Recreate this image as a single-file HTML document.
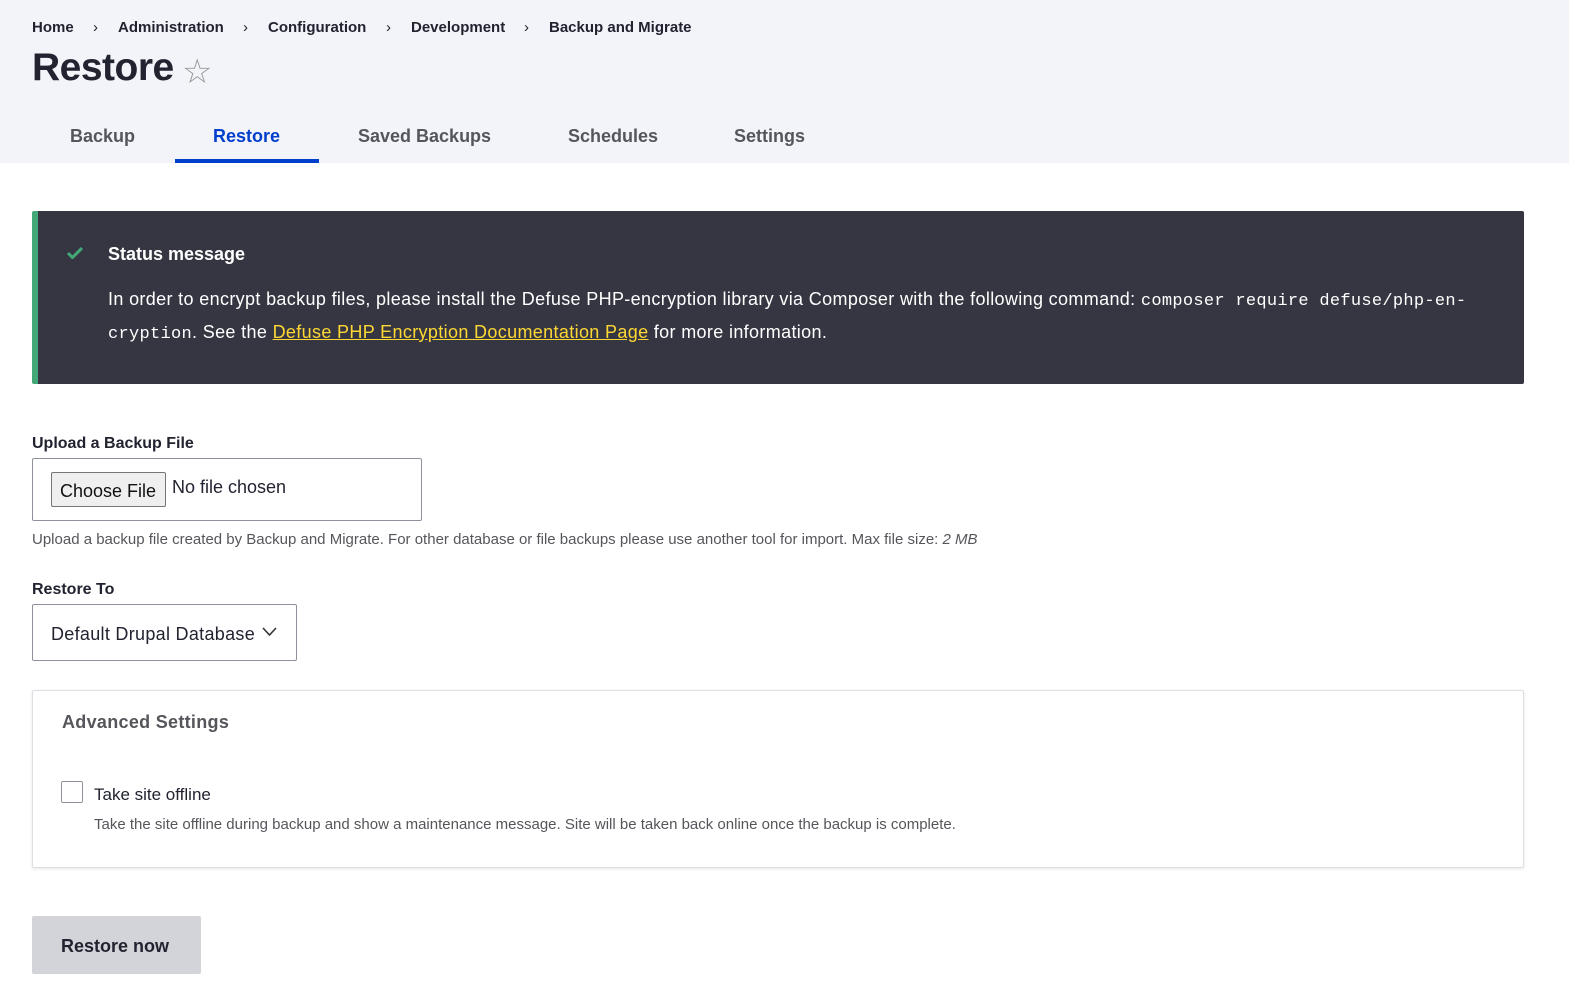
<!DOCTYPE html>
<html><head><meta charset="utf-8"><style>
*{box-sizing:border-box;margin:0;padding:0}
body{width:1569px;height:1002px;background:#fff;font-family:"Liberation Sans",sans-serif;color:#222330;position:relative;overflow:hidden}
.hdr{position:absolute;left:0;top:0;width:1569px;height:163px;background:#f3f4f9}
.abs{position:absolute;white-space:nowrap}
.bc{top:19px;font-size:15px;font-weight:bold;color:#222330}
.h1{left:32px;top:46px;font-size:39px;font-weight:bold;letter-spacing:-0.5px}
.tab{top:126px;font-size:18px;font-weight:bold;color:#55565b}
.msg{position:absolute;left:32px;top:211px;width:1492px;height:173px;background:#353641;border-left:6px solid #42a877;border-radius:2px}
.msg p{font-size:18px;color:#fff;line-height:31px;letter-spacing:0.35px}
code{font-family:"Liberation Mono",monospace;font-size:17px;letter-spacing:0.3px}
.lbl{font-size:16px;font-weight:bold}
</style></head><body>
<div class="hdr"></div>
<div class="abs bc" style="left:32px">Home</div>
<div class="abs bc" style="left:93px;font-weight:normal">›</div>
<div class="abs bc" style="left:118px">Administration</div>
<div class="abs bc" style="left:243px;font-weight:normal">›</div>
<div class="abs bc" style="left:268px">Configuration</div>
<div class="abs bc" style="left:386px;font-weight:normal">›</div>
<div class="abs bc" style="left:411px">Development</div>
<div class="abs bc" style="left:524px;font-weight:normal">›</div>
<div class="abs bc" style="left:549px">Backup and Migrate</div>
<div class="abs h1">Restore</div>
<div class="abs" style="left:182px;top:52px;font-size:34px;color:#999">☆</div>
<div class="abs tab" style="left:70px">Backup</div>
<div class="abs tab" style="left:213px;color:#003ecc">Restore</div>
<div style="position:absolute;left:175px;top:159px;width:144px;height:4px;background:#003ecc"></div>
<div class="abs tab" style="left:358px">Saved Backups</div>
<div class="abs tab" style="left:568px">Schedules</div>
<div class="abs tab" style="left:734px">Settings</div>

<div class="msg">
<svg style="position:absolute;left:29px;top:35px" width="16" height="13" viewBox="0 0 16 13"><path d="M1 7l4.5 4.5L15 2" stroke="#42a877" stroke-width="3" fill="none"/></svg>
<div class="abs" style="left:70px;top:33px;font-size:18px;font-weight:bold;color:#fff">Status message</div>
<p style="position:absolute;left:70px;top:73px;width:1410px">In order to encrypt backup files, please install the Defuse PHP-encryption library via Composer with the following command: <code>composer require defuse/php-en-<br>cryption</code>. See the <span style="color:#fdd835;text-decoration:underline">Defuse PHP Encryption Documentation Page</span> for more information.</p>
</div>

<div class="abs lbl" style="left:32px;top:435px">Upload a Backup File</div>
<div style="position:absolute;left:32px;top:458px;width:390px;height:63px;border:1px solid #8e929c;border-radius:2px"></div>
<div style="position:absolute;left:51px;top:472px;width:115px;height:35px;background:#efefef;border:1px solid #767676;border-radius:2px;font-size:18px;padding:8px 0 0 8px;color:#111">Choose File</div>
<div class="abs" style="left:172px;top:477px;font-size:18px">No file chosen</div>
<div class="abs" style="left:32px;top:531px;font-size:15px;color:#55565b">Upload a backup file created by Backup and Migrate. For other database or file backups please use another tool for import. Max file size: <i>2 MB</i></div>

<div class="abs lbl" style="left:32px;top:581px">Restore To</div>
<div style="position:absolute;left:32px;top:604px;width:265px;height:57px;border:1px solid #8e929c;border-radius:2px"></div>
<div class="abs" style="left:51px;top:624px;font-size:18px;letter-spacing:0.3px">Default Drupal Database</div>
<svg style="position:absolute;left:262px;top:627px" width="15" height="10" viewBox="0 0 15 10"><path d="M1 1l6.5 7L14 1" stroke="#333" stroke-width="1.6" fill="none"/></svg>

<div style="position:absolute;left:32px;top:690px;width:1492px;height:178px;border:1px solid #dedfe4;border-radius:2px;box-shadow:0 1px 3px rgba(0,0,0,.1)"></div>
<div class="abs" style="left:62px;top:712px;font-size:18px;font-weight:bold;color:#55565b;letter-spacing:0.3px">Advanced Settings</div>
<div style="position:absolute;left:61px;top:781px;width:22px;height:22px;border:1px solid #8e929c;border-radius:2px"></div>
<div class="abs" style="left:94px;top:785px;font-size:17px">Take site offline</div>
<div class="abs" style="left:94px;top:816px;font-size:15px;color:#55565b">Take the site offline during backup and show a maintenance message. Site will be taken back online once the backup is complete.</div>

<div style="position:absolute;left:32px;top:916px;width:169px;height:58px;background:#d3d4d9;border-radius:2px;font-size:18px;font-weight:bold;color:#222330;padding:20px 0 0 29px">Restore now</div>
</body></html>
